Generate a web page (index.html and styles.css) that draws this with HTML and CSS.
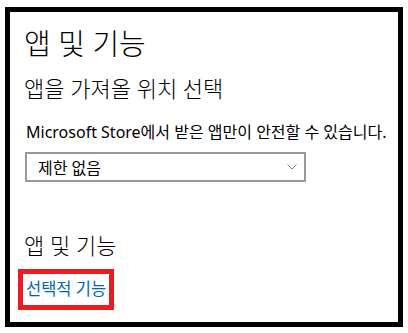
FILE: index.html
```html
<!DOCTYPE html>
<html lang="ko">
<head>
    <meta charset="UTF-8">
    <title>앱 및 기능</title>
    <link rel="stylesheet" href="styles.css">
</head>
<body>
    <div class="frame">
        <h1 class="title">앱 및 기능</h1>
        <h2 class="subtitle">앱을 가져올 위치 선택</h2>
        <p class="hint">Microsoft Store에서 받은 앱만이 안전할 수 있습니다.</p>
        <div class="select">
            <span>제한 없음</span>
            <svg class="chevron" width="10" height="6" viewBox="0 0 10 6">
                <path d="M0.5 0.5 L5 5 L9.5 0.5" fill="none" stroke="#808080" stroke-width="1"/>
            </svg>
        </div>
        <h2 class="section">앱 및 기능</h2>
        <div class="mark">
            <a href="#" class="link">선택적 기능</a>
        </div>
    </div>
</body>
</html>
```

FILE: styles.css
```css
body { margin: 0; background-color: #fff; font-family: "Noto Sans", "Noto Sans CJK KR", sans-serif; color: #000; }
.frame { margin: 7px 5px 6px 5px; height: 310px; border: 5px solid #000; padding: 0 0 0 14px; box-sizing: content-box; display: flex; flex-direction: column; align-items: flex-start; }
.title { margin: 14px 0 0 0; font-size: 29px; font-weight: 300; line-height: 36px; }
.subtitle { margin: 12px 0 0 0; font-size: 22px; font-weight: 300; line-height: 28px; }
.hint { margin: 19px 0 0 2px; font-size: 16px; font-weight: 400; line-height: 22px; }
.select { margin: 9px 0 0 1px; width: 259px; height: 26px; border: 2px solid #999; display: flex; align-items: center; justify-content: space-between; padding: 0 7px 0 11px; box-sizing: content-box; font-size: 16px; }
.chevron { display: block; }
.section { margin: 49px 0 0 0; font-size: 22px; font-weight: 300; line-height: 28px; }
.mark { margin: 10px 0 0 -6px; border: 5px solid #ed1c24; padding: 2px 3px 3px 3px; }
.link { color: #0067b8; text-decoration: none; font-size: 16.5px; line-height: 26px; display: block; }
```
